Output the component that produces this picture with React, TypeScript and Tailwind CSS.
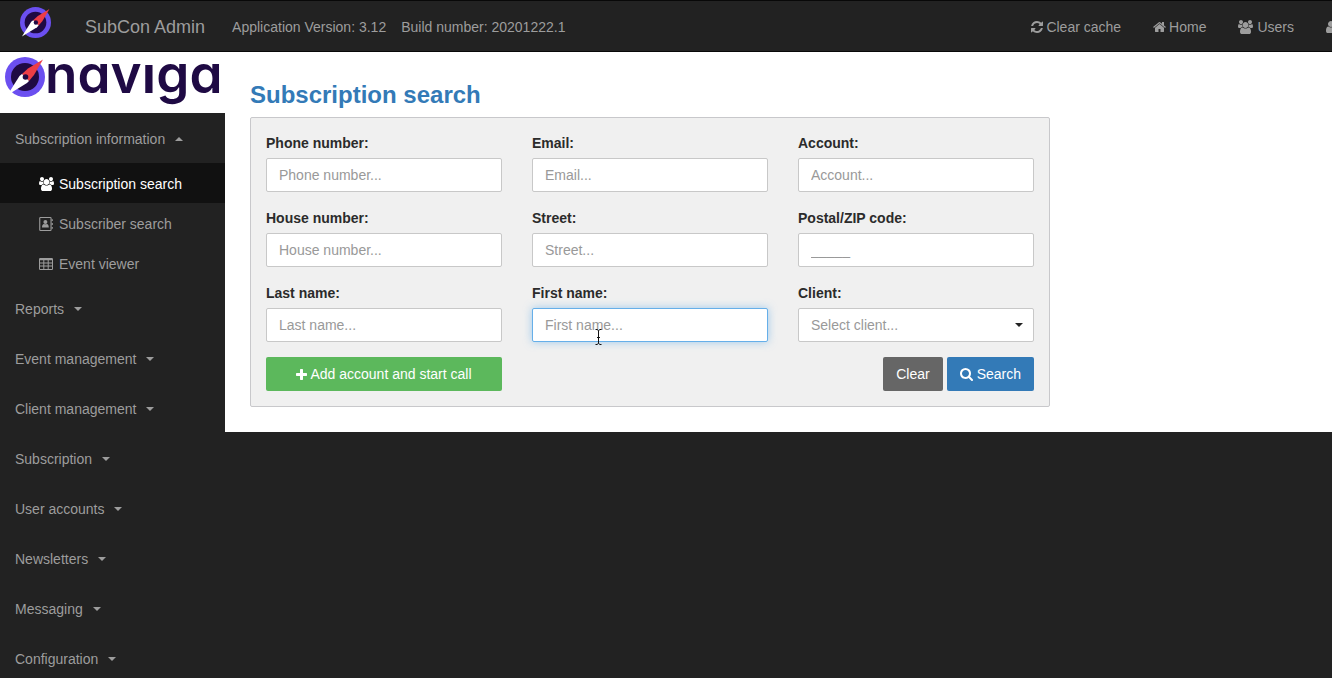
import React from "react";

type IconProps = { className?: string };

function UsersIcon({ className }: IconProps) {
  return (
    <svg viewBox="64 0 1920 1792" fill="currentColor" className={className} aria-hidden="true">
      <path d="M657 896q-162 5-265 128h-134q-82 0-138-40.5t-56-118.5q0-353 124-353 6 0 43.5 21t97.5 42.5 119 21.5q67 0 133-23-5 37-5 66 0 139 81 256zm1071 637q0 120-73 189.5t-194 69.5h-874q-121 0-194-69.5t-73-189.5q0-53 3.5-103.5t14-109 26.5-108.5 43-97.5 62-81 85.5-53.5 111.5-20q10 0 43 21.5t73 48 107 48 135 21.5 135-21.5 107-48 73-48 43-21.5q61 0 111.5 20t85.5 53.5 62 81 43 97.5 26.5 108.5 14 109 3.5 103.5zm-1024-1277q0 106-75 181t-181 75-181-75-75-181 75-181 181-75 181 75 75 181zm704 384q0 159-112.5 271.5t-271.5 112.5-271.5-112.5-112.5-271.5 112.5-271.5 271.5-112.5 271.5 112.5 112.5 271.5zm576 225q0 78-56 118.5t-138 40.5h-134q-103-123-265-128 81-117 81-256 0-29-5-66 66 23 133 23 59 0 119-21.5t97.5-42.5 43.5-21q124 0 124 353zm-128-609q0 106-75 181t-181 75-181-75-75-181 75-181 181-75 181 75 75 181z" />
    </svg>
  );
}

function RefreshIcon({ className }: IconProps) {
  return (
    <svg viewBox="128 128 1536 1536" fill="currentColor" className={className} aria-hidden="true">
      <path d="M1639 1056q0 5-1 7-64 268-268 434.5t-478 166.5q-146 0-282.5-55t-243.5-157l-129 129q-19 19-45 19t-45-19-19-45v-448q0-26 19-45t45-19h448q26 0 45 19t19 45-19 45l-137 137q71 66 161 102t187 36q134 0 250-65t186-179q11-17 53-117 8-23 30-23h192q13 0 22.5 9.5t9.5 22.5zm25-800v448q0 26-19 45t-45 19h-448q-26 0-45-19t-19-45 19-45l138-138q-148-137-349-137-134 0-250 65t-186 179q-11 17-53 117-8 23-30 23h-199q-13 0-22.5-9.5t-9.5-22.5v-7q65-268 270-434.5t480-166.5q146 0 284 55.5t245 156.5l130-129q19-19 45-19t45 19 19 45z" />
    </svg>
  );
}

function HomeIcon({ className }: IconProps) {
  return (
    <svg viewBox="64 128 1664 1536" fill="currentColor" className={className} aria-hidden="true">
      <path d="M1472 992v480q0 26-19 45t-45 19h-384v-384h-256v384h-384q-26 0-45-19t-19-45v-480q0-1 .5-3t.5-3l575-474 575 474q1 2 1 6zm223-69l-62 74q-8 9-21 11h-3q-13 0-21-7l-692-577-692 577q-12 8-24 7-13-2-21-11l-62-74q-8-10-7-23.5t11-21.5l719-599q32-26 76-26t76 26l244 204v-195q0-14 9-23t23-9h192q14 0 23 9t9 23v408l219 182q10 8 11 21.5t-7 23.5z" />
    </svg>
  );
}

function UserIcon({ className }: IconProps) {
  return (
    <svg viewBox="256 128 1280 1536" fill="currentColor" className={className} aria-hidden="true">
      <path d="M1536 1399q0 109-62.5 187t-150.5 78h-854q-88 0-150.5-78t-62.5-187q0-85 8.5-160.5t31.5-152 58.5-131 94-89 134.5-34.5q131 128 313 128t313-128q76 0 134.5 34.5t94 89 58.5 131 31.5 152 8.5 160.5zm-256-887q0 159-112.5 271.5t-271.5 112.5-271.5-112.5-112.5-271.5 112.5-271.5 271.5-112.5 271.5 112.5 112.5 271.5z" />
    </svg>
  );
}

function SearchIcon({ className }: IconProps) {
  return (
    <svg viewBox="64 128 1664 1664" fill="currentColor" className={className} aria-hidden="true">
      <path d="M1216 832q0-185-131.5-316.5t-316.5-131.5-316.5 131.5-131.5 316.5 131.5 316.5 316.5 131.5 316.5-131.5 131.5-316.5zm512 832q0 52-38 90t-90 38q-54 0-90-38l-343-342q-179 124-399 124-143 0-273.5-55.5t-225-150-150-225-55.5-273.5 55.5-273.5 150-225 225-150 273.5-55.5 273.5 55.5 225 150 150 225 55.5 273.5q0 220-124 399l343 343q37 37 37 90z" />
    </svg>
  );
}

function PlusIcon({ className }: IconProps) {
  return (
    <svg viewBox="192 128 1408 1408" fill="currentColor" className={className} aria-hidden="true">
      <path d="M1600 736v192q0 40-28 68t-68 28h-416v416q0 40-28 68t-68 28h-192q-40 0-68-28t-28-68v-416h-416q-40 0-68-28t-28-68v-192q0-40 28-68t68-28h416v-416q0-40 28-68t68-28h192q40 0 68 28t28 68v416h416q40 0 68 28t28 68z" />
    </svg>
  );
}

function AddressBookIcon({ className }: IconProps) {
  return (
    <svg viewBox="0 0 14 14" fill="currentColor" className={className} aria-hidden="true">
      <path
        fillRule="evenodd"
        d="M1.5 0h9.8a1.3 1.3 0 0 1 1.3 1.3v11.4a1.3 1.3 0 0 1-1.3 1.3H1.5a1.3 1.3 0 0 1-1.3-1.3V1.3A1.3 1.3 0 0 1 1.5 0zM1.3 1v12h10.2V1z"
      />
      <circle cx="6.4" cy="5.1" r="2" />
      <path d="M3 10.4c0-2.2.8-3.5 2-3.5.8.6 2 .6 2.8 0 1.2 0 2 1.3 2 3.5z" />
      <path d="M12.6 2.2h1.2v1.8h-1.2zM12.6 6.1h1.2v1.8h-1.2zM12.6 10h1.2v1.8h-1.2z" />
    </svg>
  );
}

function TableIcon({ className }: IconProps) {
  return (
    <svg viewBox="0 0 14 12" fill="currentColor" className={className} aria-hidden="true">
      <path
        fillRule="evenodd"
        d="M1.2 0h11.6A1.2 1.2 0 0 1 14 1.2v9.6a1.2 1.2 0 0 1-1.2 1.2H1.2A1.2 1.2 0 0 1 0 10.8V1.2A1.2 1.2 0 0 1 1.2 0zM1 2.3v2.3h3.3V2.3zm4.3 0v2.3h3.4V2.3zm4.4 0v2.3H13V2.3zM1 5.6v2h3.3v-2zm4.3 0v2h3.4v-2zm4.4 0v2H13v-2zM1 8.6V11h3.3V8.6zm4.3 0V11h3.4V8.6zm4.4 0V11H13V8.6z"
      />
    </svg>
  );
}

function CompassLogo({ className }: IconProps) {
  return (
    <svg viewBox="0 0 40 40" className={className} aria-hidden="true">
      <circle cx="20" cy="20" r="20" fill="#6b4ff0" />
      <circle cx="20" cy="20" r="14" fill="#1f0a44" />
      <path d="M38 2.5 23 11.5 17 17 24 24 29 18z" fill="#ec3d46" />
      <path d="M2.5 38 14.5 19 17 17 24 24 22 26z" fill="#ffffff" />
      <circle cx="20.5" cy="20" r="2.8" fill="#1f0a44" />
    </svg>
  );
}

function Caret({ up = false }: { up?: boolean }) {
  return (
    <svg viewBox="0 0 8 4" fill="currentColor" className="h-1 w-2" aria-hidden="true">
      <path d={up ? "M0 4h8L4 0z" : "M0 0h8L4 4z"} />
    </svg>
  );
}

const menu = [
  "Reports",
  "Event management",
  "Client management",
  "Subscription",
  "User accounts",
  "Newsletters",
  "Messaging",
  "Configuration",
];

const inputClass =
  "block h-[34px] w-full rounded-xs border border-[#c8c8c8] bg-white px-3 text-sm text-[#555] placeholder:text-[#999] outline-none";

type FieldProps = { id: string; label: string; children: React.ReactNode };

function Field({ id, label, children }: FieldProps) {
  return (
    <div className="flex min-w-0 flex-col gap-[5px]">
      <label htmlFor={id} className="text-sm font-bold text-[#2b2b2b]">
        {label}
      </label>
      {children}
    </div>
  );
}

function TopBar() {
  return (
    <header className="flex h-[52px] items-center overflow-hidden border-y border-[#080808] bg-[#222] pt-px pl-5 whitespace-nowrap text-[#9d9d9d]">
      <a href="#" aria-label="Naviga" className="mr-[34px] mb-2 shrink-0">
        <CompassLogo className="size-[31px]" />
      </a>
      <a href="#" className="mr-[27px] text-lg">
        SubCon Admin
      </a>
      <span className="mr-[15px] text-sm">Application Version: 3.12</span>
      <span className="text-sm">Build number: 20201222.1</span>
      <nav className="-mr-6 ml-auto flex shrink-0 gap-8 text-sm">
        <a href="#" className="flex items-center gap-[3px]">
          <RefreshIcon className="size-3" />
          Clear cache
        </a>
        <a href="#" className="flex items-center gap-[3px]">
          <HomeIcon className="h-3 w-[13px]" />
          Home
        </a>
        <a href="#" className="flex items-center gap-1">
          <UsersIcon className="h-[14px] w-[15px]" />
          Users
        </a>
        <a href="#" aria-label="Profile" className="flex w-[30px] items-center">
          <UserIcon className="h-3 w-[10px]" />
        </a>
      </nav>
    </header>
  );
}

function Sidebar() {
  return (
    <aside className="w-[225px] shrink-0 text-sm text-[#9d9d9d]">
      <a href="#" aria-label="naviga" className="flex h-[61px] items-start bg-white pt-[5px] pl-[5px]">
        <CompassLogo className="size-10 shrink-0" />
        <span className="font-['Inter'] text-[53px] leading-[34px] font-semibold text-[#1f0a44] [font-feature-settings:'cv11']">
          nav<span className="font-['Liberation_Sans']">ı</span>ga
        </span>
      </a>
      <nav>
        <button type="button" className="flex h-[50px] w-full items-center gap-[10px] px-[15px] pt-0.5">
          Subscription information
          <Caret up />
        </button>
        <a href="#" className="flex h-10 items-center gap-[5px] bg-[#111] pt-0.5 pl-[39px] text-white">
          <UsersIcon className="h-[14px] w-[15px]" />
          Subscription search
        </a>
        <a href="#" className="flex h-10 items-center gap-[6px] pt-0.5 pl-[39px]">
          <AddressBookIcon className="size-[14px]" />
          Subscriber search
        </a>
        <a href="#" className="flex h-10 items-center gap-[6px] pt-0.5 pl-[39px]">
          <TableIcon className="h-3 w-[14px]" />
          Event viewer
        </a>
        {menu.map((item) => (
          <button key={item} type="button" className="flex h-[50px] w-full items-center gap-[10px] px-[15px] pt-0.5">
            {item}
            <Caret />
          </button>
        ))}
      </nav>
    </aside>
  );
}

function SearchForm() {
  return (
    <form className="flex max-w-[800px] flex-col gap-[15px] rounded-xs border border-[#c8c8cb] bg-[#f0f0f0] p-[15px]">
      <div className="grid grid-cols-3 gap-x-[30px] gap-y-4">
        <Field id="phone" label="Phone number:">
          <input id="phone" placeholder="Phone number..." className={inputClass} />
        </Field>
        <Field id="email" label="Email:">
          <input id="email" placeholder="Email..." className={inputClass} />
        </Field>
        <Field id="account" label="Account:">
          <input id="account" placeholder="Account..." className={inputClass} />
        </Field>
        <Field id="house" label="House number:">
          <input id="house" placeholder="House number..." className={inputClass} />
        </Field>
        <Field id="street" label="Street:">
          <input id="street" placeholder="Street..." className={inputClass} />
        </Field>
        <Field id="postal" label="Postal/ZIP code:">
          <input id="postal" placeholder="_____" className={inputClass} />
        </Field>
        <Field id="last" label="Last name:">
          <input id="last" placeholder="Last name..." className={inputClass} />
        </Field>
        <Field id="first" label="First name:">
          <div className="relative">
            <input
              id="first"
              placeholder="First name..."
              className="block h-[34px] w-full rounded-xs border border-[#66afe9] bg-white px-3 text-sm text-[#555] shadow-[0_0_8px_rgba(102,175,233,0.6)] outline-none placeholder:text-[#999]"
            />
            <svg viewBox="0 0 7 16" className="absolute top-[21px] left-[63px] h-4 w-[7px]" fill="none" aria-hidden="true">
              <path d="M0.5 0.5h1.5l1.5 1 1.5-1h1.5M3.5 1.5v13M2 8.5h3M0.5 15.5h1.5l1.5-1 1.5 1h1.5" stroke="#111" />
            </svg>
          </div>
        </Field>
        <Field id="client" label="Client:">
          <div className="relative">
            <select
              id="client"
              className="block h-[34px] w-full appearance-none rounded-xs border border-[#c8c8c8] bg-white px-3 text-sm text-[#999] outline-none"
            >
              <option>Select client...</option>
            </select>
            <span className="pointer-events-none absolute top-[15px] right-[11px] text-[#222]">
              <Caret />
            </span>
          </div>
        </Field>
      </div>
      <div className="grid grid-cols-3 gap-x-[30px]">
        <button
          type="button"
          className="flex h-[34px] items-center justify-center gap-[3px] rounded-xs bg-[#5cb85c] text-sm text-white"
        >
          <PlusIcon className="size-[11px]" />
          Add account and start call
        </button>
        <div className="col-span-2 flex justify-end gap-1">
          <button type="reset" className="h-[34px] rounded-xs bg-[#666] px-[13px] text-sm text-white">
            Clear
          </button>
          <button type="button" className="flex h-[34px] items-center gap-1 rounded-xs bg-[#337ab7] px-[13px] text-sm text-white">
            <SearchIcon className="size-[13px]" />
            Search
          </button>
        </div>
      </div>
    </form>
  );
}

export default function App() {
  return (
    <div className="h-screen overflow-hidden bg-[#222] font-['Liberation_Sans',Arial,sans-serif]">
      <TopBar />
      <div className="flex items-start">
        <Sidebar />
        <main className="min-w-0 flex-1 bg-white px-[25px] pt-[27px] pb-[25px]">
          <h1 className="mb-1.5 text-2xl font-bold text-[#337ab7]">Subscription search</h1>
          <SearchForm />
        </main>
      </div>
    </div>
  );
}
